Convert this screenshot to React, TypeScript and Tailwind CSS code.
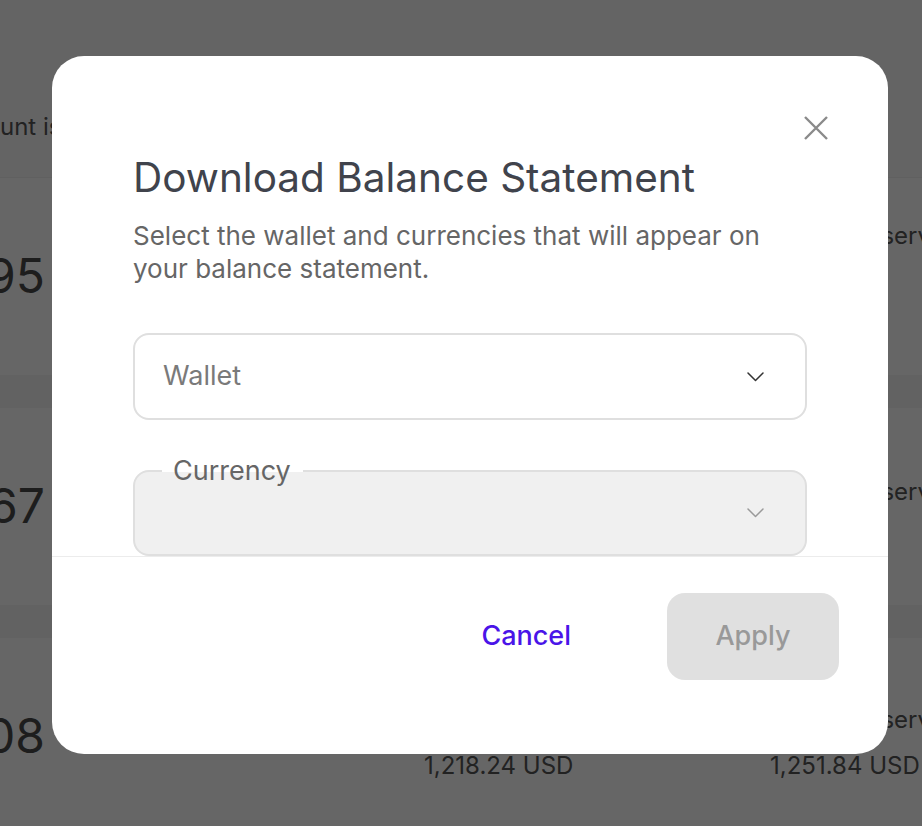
import React from 'react';

function Chevron({ className }: { className?: string }) {
  return (
    <svg width="17" height="10" viewBox="0 0 17 10" fill="none" className={className}>
      <path d="M1 1l7.5 7.5L16 1" stroke="currentColor" strokeWidth="1.5" strokeLinecap="round" strokeLinejoin="round" />
    </svg>
  );
}

function Row({ num, top, label, value, total, tall }: { num: string; top: string; label: string; value: string; total?: string; tall?: boolean }) {
  return (
    <div className={`flex bg-white ${tall ? 'flex-1' : 'h-[197px] shrink-0'}`}>
      <div className="w-[45px] shrink-0 pt-[70px] flex justify-end overflow-hidden">
        <span className="text-[48px] leading-[56px] text-[#4a4a4a] whitespace-nowrap">{num}</span>
      </div>
      <div className={`ml-[379px] w-[346px] shrink-0 ${top}`}>
        <div className="h-[28px]" />
        {total && <p className="mt-[18px] text-[24px] leading-[28px] whitespace-nowrap">{total}</p>}
      </div>
      <div className={`shrink-0 ${top}`}>
        <p className="text-[24px] leading-[28px] whitespace-nowrap">{label}</p>
        <p className="mt-[18px] text-[24px] leading-[28px] whitespace-nowrap">{value}</p>
      </div>
    </div>
  );
}

export default function App() {
  return (
    <div className="relative w-[922px] h-[826px] overflow-hidden font-['Inter',_sans-serif]">
      {/* page behind the dialog */}
      <div className="w-[922px] h-[826px] flex flex-col bg-white text-[#555]">
        <div className="h-[178px] shrink-0 bg-[#fbfbfb] border-b border-[#f0f0f0] flex items-end pb-[36px]">
          <p className="text-[24px] leading-[28px] whitespace-nowrap">unt is</p>
        </div>
        <Row num="1,995" top="pt-[44px]" label="Total in reserve" value="0.00" />
        <div className="h-[33px] shrink-0 bg-[#f4f4f4]" />
        <Row num="2,667" top="pt-[70px]" label="Total in reserve" value="0.00" />
        <div className="h-[33px] shrink-0 bg-[#f4f4f4]" />
        <Row num="3,008" top="pt-[68px]" label="Total in reserve" value="1,251.84 USD" total="1,218.24 USD" tall />
      </div>

      <div className="absolute inset-0 bg-black/60" />

      {/* dialog */}
      <div className="absolute left-[52px] top-[56px] w-[836px] h-[698px] bg-white rounded-[32px] flex flex-col overflow-hidden">
        <button className="absolute left-[751px] top-[59px] w-[26px] h-[26px] text-[#8a8a8a]">
          <svg width="26" height="26" viewBox="0 0 26 26" fill="none">
            <path d="M2 2l22 22M24 2L2 24" stroke="currentColor" strokeWidth="2.4" />
          </svg>
        </button>

        <div className="h-[500px] shrink-0 px-[81px] pt-[100px]">
          <h2 className="text-[40.5px] leading-[44px] text-[#40434c]">Download Balance Statement</h2>
          <p className="mt-[19px] text-[26px] leading-[33px] text-[#666]">
            Select the wallet and currencies that will appear on your balance statement.
          </p>

          <div className="mt-[48px] h-[87px] rounded-2xl border-2 border-[#dfdfdf] flex items-center justify-between pl-[28px] pr-[41px]">
            <span className="text-[27px] text-[#7a7a7a]">Wallet</span>
            <Chevron className="text-[#333]" />
          </div>

          <div className="relative mt-[50px] h-[86px] rounded-2xl border-2 border-[#dfdfdf] bg-[#f0f0f0] flex items-center justify-end pr-[41px]">
            <span className="absolute left-[27px] -top-[2px] h-[2px] w-[141px] bg-white" />
            <span className="absolute left-[38px] -top-[17px] text-[27px] leading-[32px] text-[#666]">Currency</span>
            <Chevron className="text-[#9a9a9a]" />
          </div>
        </div>

        <div className="flex-1 border-t border-[#ececec] flex justify-end items-start pt-[36px] pr-[49px] gap-[48px]">
          <button className="h-[87px] px-12 text-[27px] font-medium text-[#4a14e8]">Cancel</button>
          <button className="h-[87px] w-[172px] rounded-[18px] bg-[#e0e0e0] text-[27px] font-medium text-[#999]">Apply</button>
        </div>
      </div>
    </div>
  );
}
